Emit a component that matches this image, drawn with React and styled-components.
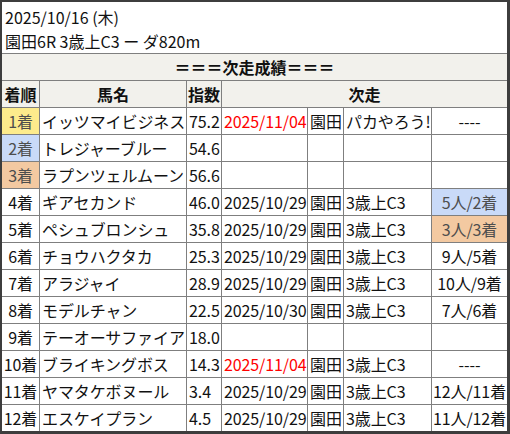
import styled, { createGlobalStyle } from 'styled-components';

const GlobalStyle = createGlobalStyle`
  html, body {
    margin: 0;
    padding: 0;
    background: #ffffff;
  }
  body {
    font-family: "Noto Sans CJK JP", "Noto Sans", sans-serif;
  }
`;

const rows = [
  { rank: '1着', tone: 'gold', name: 'イッツマイビジネス', idx: '75.2', date: '2025/11/04', red: true, place: '園田', race: 'パカやろう!', result: '----' },
  { rank: '2着', tone: 'silver', name: 'トレジャーブルー', idx: '54.6' },
  { rank: '3着', tone: 'bronze', name: 'ラプンツェルムーン', idx: '56.6' },
  { rank: '4着', name: 'ギアセカンド', idx: '46.0', date: '2025/10/29', place: '園田', race: '3歳上C3', result: '5人/2着', resultTone: 'silver' },
  { rank: '5着', name: 'ペシュブロンシュ', idx: '35.8', date: '2025/10/29', place: '園田', race: '3歳上C3', result: '3人/3着', resultTone: 'bronze' },
  { rank: '6着', name: 'チョウハクタカ', idx: '25.3', date: '2025/10/29', place: '園田', race: '3歳上C3', result: '9人/5着' },
  { rank: '7着', name: 'アラジャイ', idx: '28.9', date: '2025/10/29', place: '園田', race: '3歳上C3', result: '10人/9着' },
  { rank: '8着', name: 'モデルチャン', idx: '22.5', date: '2025/10/30', place: '園田', race: '3歳上C3', result: '7人/6着' },
  { rank: '9着', name: 'テーオーサファイア', idx: '18.0' },
  { rank: '10着', name: 'ブライキングボス', idx: '14.3', date: '2025/11/04', red: true, place: '園田', race: '3歳上C3', result: '----' },
  { rank: '11着', name: 'ヤマタケボヌール', idx: '3.4', date: '2025/10/29', place: '園田', race: '3歳上C3', result: '12人/11着' },
  { rank: '12着', name: 'エスケイプラン', idx: '4.5', date: '2025/10/29', place: '園田', race: '3歳上C3', result: '11人/12着' },
];

const tones = {
  gold: '#fdeb8c',
  silver: '#c9daf8',
  bronze: '#f3c9a1',
};

function App() {
  return (
    <>
      <GlobalStyle />
      <Frame>
        <Heading>
          <HeadLine>2025/10/16 (木)</HeadLine>
          <HeadLine>園田6R 3歳上C3 ー ダ820m</HeadLine>
        </Heading>
        <Grid>
          <TitleCell>＝＝＝次走成績＝＝＝</TitleCell>
          <HeadCell>着順</HeadCell>
          <HeadCell>馬名</HeadCell>
          <HeadCell>指数</HeadCell>
          <HeadCell $span={4}>次走</HeadCell>
          {rows.map((r) => (
            <Row key={r.rank} r={r} />
          ))}
        </Grid>
      </Frame>
    </>
  );
}

function Row({ r }) {
  return (
    <>
      <Cell $center $tone={r.tone}>{r.rank}</Cell>
      <Cell>{r.name}</Cell>
      <Cell>{r.idx}</Cell>
      <Cell $red={r.red}>{r.date}</Cell>
      <Cell>{r.place}</Cell>
      <Cell>{r.race}</Cell>
      <Cell $center $tone={r.resultTone}>{r.result}</Cell>
    </>
  );
}

const Frame = styled.div`
  width: 510px;
  height: 434px;
  box-sizing: border-box;
  border-style: solid;
  border-color: #3d3d3d;
  border-width: 2px 3px 3px 2px;
  background: #ffffff;
  display: flex;
  flex-direction: column;
  overflow: hidden;
`;

const Heading = styled.div`
  height: 51px;
  box-sizing: border-box;
  padding: 3px 0 0 3px;
  color: #111;
`;

const HeadLine = styled.div`
  font-size: 16px;
  line-height: 24px;
  white-space: nowrap;
`;

const Grid = styled.div`
  display: grid;
  grid-template-columns: 37px 146px 34px 85px 35px 87px 75px;
  grid-auto-rows: 26px;
  gap: 1px;
  padding-top: 1px;
  background: #7f7f7f;
`;

const Cell = styled.div`
  display: flex;
  align-items: center;
  justify-content: ${(p) => (p.$center ? 'center' : 'flex-start')};
  padding: 0 0 0 2px;
  padding-left: ${(p) => (p.$center ? '0' : '2px')};
  background: ${(p) => (p.$tone ? tones[p.$tone] : '#ffffff')};
  color: ${(p) => (p.$red ? '#ff0000' : p.$tone ? '#4d4d4d' : '#111111')};
  font-size: 16px;
  white-space: nowrap;
  overflow: hidden;
  letter-spacing: -0.1px;
`;

const HeadCell = styled.div`
  grid-column: span ${(p) => p.$span || 1};
  display: flex;
  align-items: center;
  justify-content: center;
  background: #f2f1ec;
  color: #111;
  font-size: 16px;
  font-weight: 700;
  white-space: nowrap;
`;

const TitleCell = styled(HeadCell)`
  grid-column: 1 / -1;
`;

export default App;
